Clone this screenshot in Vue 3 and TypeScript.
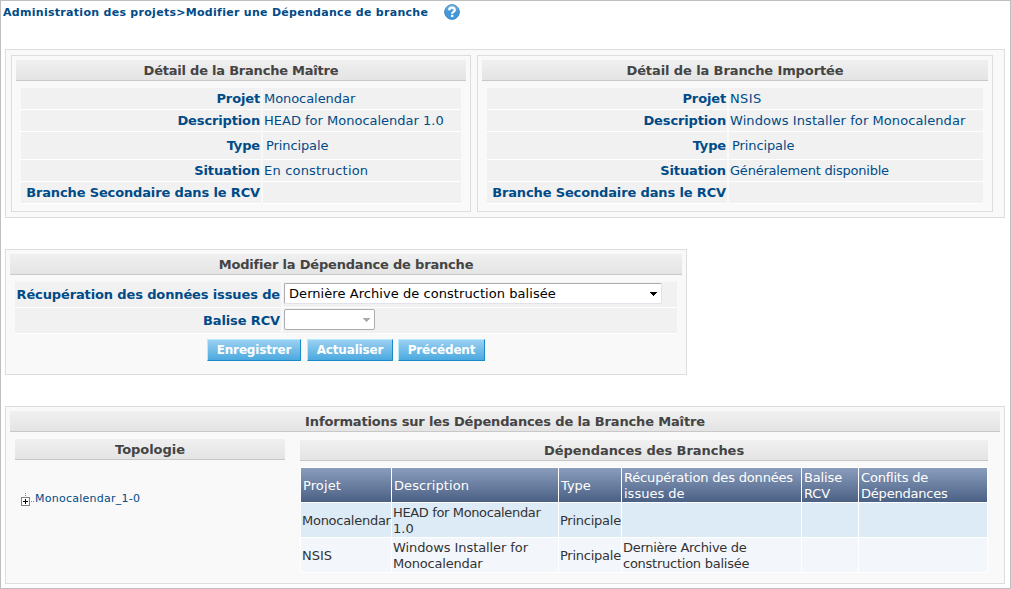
<script setup lang="ts">
interface Detail {
  label: string
  value: string
  tracking?: number
  tall?: boolean
}

interface Branch {
  title: string
  side: string
  rows: Detail[]
}

interface Line {
  text: string
  tracking: number
}

const branches: Branch[] = [
  {
    title: 'Détail de la Branche Maître',
    side: 'master',
    rows: [
      { label: 'Projet', value: 'Monocalendar', tracking: -0.06 },
      { label: 'Description', value: 'HEAD for Monocalendar 1.0' },
      { label: 'Type', value: 'Principale', tracking: -0.1, tall: true },
      { label: 'Situation', value: 'En construction', tracking: 0.19 },
      { label: 'Branche Secondaire dans le RCV', value: '' },
    ],
  },
  {
    title: 'Détail de la Branche Importée',
    side: 'imported',
    rows: [
      { label: 'Projet', value: 'NSIS', tracking: 0.4 },
      { label: 'Description', value: 'Windows Installer for Monocalendar', tracking: 0.08 },
      { label: 'Type', value: 'Principale', tracking: -0.1, tall: true },
      { label: 'Situation', value: 'Généralement disponible', tracking: -0.22 },
      { label: 'Branche Secondaire dans le RCV', value: '' },
    ],
  },
]

const actions = [
  { name: 'Enregistrer', key: 'save' },
  { name: 'Actualiser', key: 'refresh' },
  { name: 'Précédent', key: 'back' },
]

const line = (text: string, tracking = 0): Line => ({ text, tracking })
const spacing = (tracking = 0) => ({ letterSpacing: `${tracking}px` })

const columns: Line[][] = [
  [line('Projet', 0.1)],
  [line('Description', 0.1)],
  [line('Type')],
  [line('Récupération des données', -0.17), line('issues de', 0)],
  [line('Balise', -0.15), line('RCV', -0.15)],
  [line('Conflits de', -0.2), line('Dépendances', -0.2)],
]

const dependencies: Line[][][] = [
  [
    [line('Monocalendar', -0.27)],
    [line('HEAD for Monocalendar', -0.36), line('1.0')],
    [line('Principale', -0.25)],
    [],
    [],
    [],
  ],
  [
    [line('NSIS', 0)],
    [line('Windows Installer for', -0.08), line('Monocalendar', -0.2)],
    [line('Principale', -0.25)],
    [line('Dernière Archive de', -0.3), line('construction balisée', -0.25)],
    [],
    [],
  ],
]
</script>

<template>
  <main class="page">
    <header class="crumbs">
      <span class="crumb-text">Administration des projets&gt;Modifier une Dépendance de branche</span>
      <svg class="help" viewBox="0 0 16 16" width="16" height="16">
        <defs>
          <linearGradient id="helpFill" x1="0" y1="0" x2="0" y2="1">
            <stop offset="0" stop-color="#7fbce8" />
            <stop offset="0.5" stop-color="#4496d6" />
            <stop offset="1" stop-color="#3d9ce0" />
          </linearGradient>
        </defs>
        <circle cx="8" cy="8" r="7.4" fill="url(#helpFill)" stroke="#4585bd" stroke-width="0.9" />
        <path d="M5.2 6.2C5.2 2.9 10.8 2.9 10.8 6C10.8 7.8 8.1 8 8.1 9.8" fill="none" stroke="#fff" stroke-width="2.2" />
        <rect x="7" y="10.8" width="2.3" height="2.2" fill="#fff" />
      </svg>
    </header>

    <section class="panel details">
      <div v-for="b in branches" :key="b.side" class="box" :class="b.side">
        <h2 class="bar">{{ b.title }}</h2>
        <dl class="rows">
          <div v-for="r in b.rows" :key="r.label" class="row" :class="{ tall: r.tall }">
            <dt>{{ r.label }}</dt>
            <dd :style="spacing(r.tracking)">{{ r.value }}</dd>
          </div>
        </dl>
      </div>
    </section>

    <section class="panel edit">
      <h2 class="bar">Modifier la Dépendance de branche</h2>
      <div class="field">
        <label>Récupération des données issues de</label>
        <div class="control">
          <div class="select wide">
            <span>Dernière Archive de construction balisée</span>
            <svg width="7" height="4" viewBox="0 0 7 4" shape-rendering="crispEdges"><path d="M0 0H7V1H6V2H5V3H4V4H3V3H2V2H1V1H0Z" /></svg>
          </div>
        </div>
      </div>
      <div class="field">
        <label>Balise RCV</label>
        <div class="control">
          <div class="select disabled">
            <span></span>
            <svg width="7" height="4" viewBox="0 0 7 4" shape-rendering="crispEdges"><path d="M0 0H7V1H6V2H5V3H4V4H3V3H2V2H1V1H0Z" /></svg>
          </div>
        </div>
      </div>
      <div class="actions">
        <button v-for="a in actions" :key="a.key" :class="a.key" type="button">{{ a.name }}</button>
      </div>
    </section>

    <section class="panel info">
      <h2 class="bar">Informations sur les Dépendances de la Branche Maître</h2>
      <div class="columns">
        <div class="topology">
          <h2 class="bar">Topologie</h2>
          <div class="node">
            <svg width="14" height="14" viewBox="0 0 14 14" shape-rendering="crispEdges">
              <path d="M4 0h1v1h-1zM4 2h1v1h-1zM10 8h1v1h-1zM12 8h1v1h-1z" fill="#888" />
              <rect x="0.5" y="4.5" width="8" height="8" fill="#fff" stroke="#808080" />
              <path d="M2 8h5v1h-5zM4 6h1v5h-1z" fill="#000" />
            </svg>
            <a>Monocalendar_1-0</a>
          </div>
        </div>
        <div class="deps">
          <h2 class="bar">Dépendances des Branches</h2>
          <div class="grid">
            <div v-for="(c, i) in columns" :key="'h' + i" class="cell head">
              <div v-for="l in c" :key="l.text" :style="spacing(l.tracking)">{{ l.text }}</div>
            </div>
            <template v-for="(d, n) in dependencies" :key="n">
              <div v-for="(c, i) in d" :key="i" class="cell" :class="n % 2 ? 'odd' : 'even'">
                <div v-for="l in c" :key="l.text" :style="spacing(l.tracking)">{{ l.text }}</div>
              </div>
            </template>
          </div>
        </div>
      </div>
    </section>
  </main>
</template>

<style>
body {
  margin: 0;
  background: #fff;
}
</style>

<style scoped>
* {
  box-sizing: border-box;
}
.page {
  width: 1011px;
  height: 589px;
  border: 1px solid #bfbfbf;
  padding-left: 4px;
  overflow: hidden;
  background: #fff;
  font-family: Verdana, "DejaVu Sans", sans-serif;
  font-size: 13px;
  line-height: 16px;
  color: #004b87;
  white-space: nowrap;
}
.crumbs {
  display: flex;
  align-items: center;
  height: 22px;
  margin-left: -2px;
  font-size: 11px;
  font-weight: bold;
}
.crumb-text {
  width: 441px;
  padding-top: 1px;
  letter-spacing: 0.29px;
}
.help {
  display: block;
}
.panel {
  border: 1px solid #ddd;
  background: #f9f9f9;
  padding: 4px;
}
.bar {
  margin: 0;
  height: 21px;
  border-bottom: 1px solid #c8c8c8;
  background: linear-gradient(#f0f0f0, #e4e4e4);
  font-size: 13px;
  line-height: 21px;
  font-weight: bold;
  text-align: center;
  letter-spacing: -0.15px;
  color: #444;
}
.details {
  display: flex;
  gap: 6px;
  width: 1000px;
  height: 169px;
  margin-top: 26px;
  padding: 5px;
}
.box {
  border: 1px solid #ddd;
  padding: 4px;
  height: 157px;
}
.master {
  width: 460px;
}
.master .bar {
  letter-spacing: -0.22px;
}
.imported {
  width: 516px;
}
.imported .bar {
  letter-spacing: -0.1px;
}
.rows {
  display: flex;
  flex-direction: column;
  gap: 2px;
  margin: 7px 5px 0;
}
.row {
  display: grid;
  grid-template-columns: 240px 1fr;
  gap: 2px;
  height: 20px;
  line-height: 21px;
}
.row.tall {
  height: 26px;
  line-height: 27px;
}
.row dt,
.row dd {
  margin: 0;
  background: #f1f1f1;
  border-bottom: 1px solid #fff;
}
.row dt {
  text-align: right;
  font-weight: bold;
  letter-spacing: -0.14px;
  padding-right: 1px;
}
.row dd {
  padding-left: 1px;
}
.row.tall dd {
  padding-left: 3px;
}
.edit {
  width: 682px;
  height: 126px;
  margin-top: 31px;
}
.field {
  display: grid;
  grid-template-columns: 266px 1fr;
  gap: 2px;
  height: 24px;
  margin: 2px 5px 0;
}
.bar + .field {
  margin-top: 7px;
}
.edit .bar {
  letter-spacing: -0.19px;
}
.field label {
  background: #f1f1f1;
  border-bottom: 1px solid #fff;
  text-align: right;
  font-weight: bold;
  letter-spacing: -0.13px;
  line-height: 25px;
  padding-right: 1px;
}
.control {
  background: #f1f1f1;
  border-bottom: 1px solid #fff;
  padding: 1px;
}
.select {
  display: flex;
  align-items: center;
  justify-content: space-between;
  height: 21px;
  border: 1px solid #abadb3;
  border-radius: 2px;
  background: #fff;
  padding: 0 4px;
  color: #000;
  letter-spacing: 0.06px;
}
.select span {
  padding-top: 1px;
}
.select.wide {
  width: 378px;
  border-color: #abadb3 #e2e3ea #e2e3ea #abadb3;
}
.select.disabled {
  width: 91px;
}
.select svg {
  fill: #000;
}
.select.disabled svg {
  fill: #aaa;
}
.actions {
  display: flex;
  margin: 7px 0 0 197px;
}
.actions button {
  height: 22px;
  padding: 1px 0 0;
  border: 1px solid;
  border-color: #b5ecfd #1a8ac9 #1a8ac9 #b5ecfd;
  background: linear-gradient(#9bd0f1, #4ba9df);
  color: #fff;
  font: bold 12px/19px Verdana, "DejaVu Sans", sans-serif;
  letter-spacing: -0.16px;
}
.save {
  width: 94px;
  margin-right: 6px;
}
.refresh {
  width: 86px;
  margin-right: 5px;
}
.back {
  width: 87px;
}
.info {
  width: 1000px;
  height: 178px;
  margin-top: 31px;
}
.columns {
  display: flex;
  gap: 15px;
  padding: 7px 12px 0 5px;
}
.columns .bar {
  letter-spacing: -0.05px;
}
.topology {
  width: 270px;
}
.node {
  display: flex;
  margin: 33px 0 0 6px;
  font-size: 11px;
  line-height: 12px;
  letter-spacing: 0.25px;
}
.deps {
  width: 688px;
  margin-top: 1px;
}
.grid {
  display: grid;
  grid-template-columns: 90px 166px 62px 179px 56px 128px;
  grid-auto-rows: 34px;
  gap: 1px;
  padding: 1px;
  margin-top: 6px;
  background: #fff;
}
.cell {
  display: flex;
  flex-direction: column;
  justify-content: center;
  padding-left: 1px;
  padding-top: 2px;
  color: #333;
  font-size: 13px;
  line-height: 16px;
}
.head {
  padding-left: 2px;
  padding-top: 1px;
  color: #fff;
  background: linear-gradient(#8a9dbd, #4a6084);
}
.even {
  background: #ddebf7;
}
.odd {
  background: #f3f7fc;
}
</style>
